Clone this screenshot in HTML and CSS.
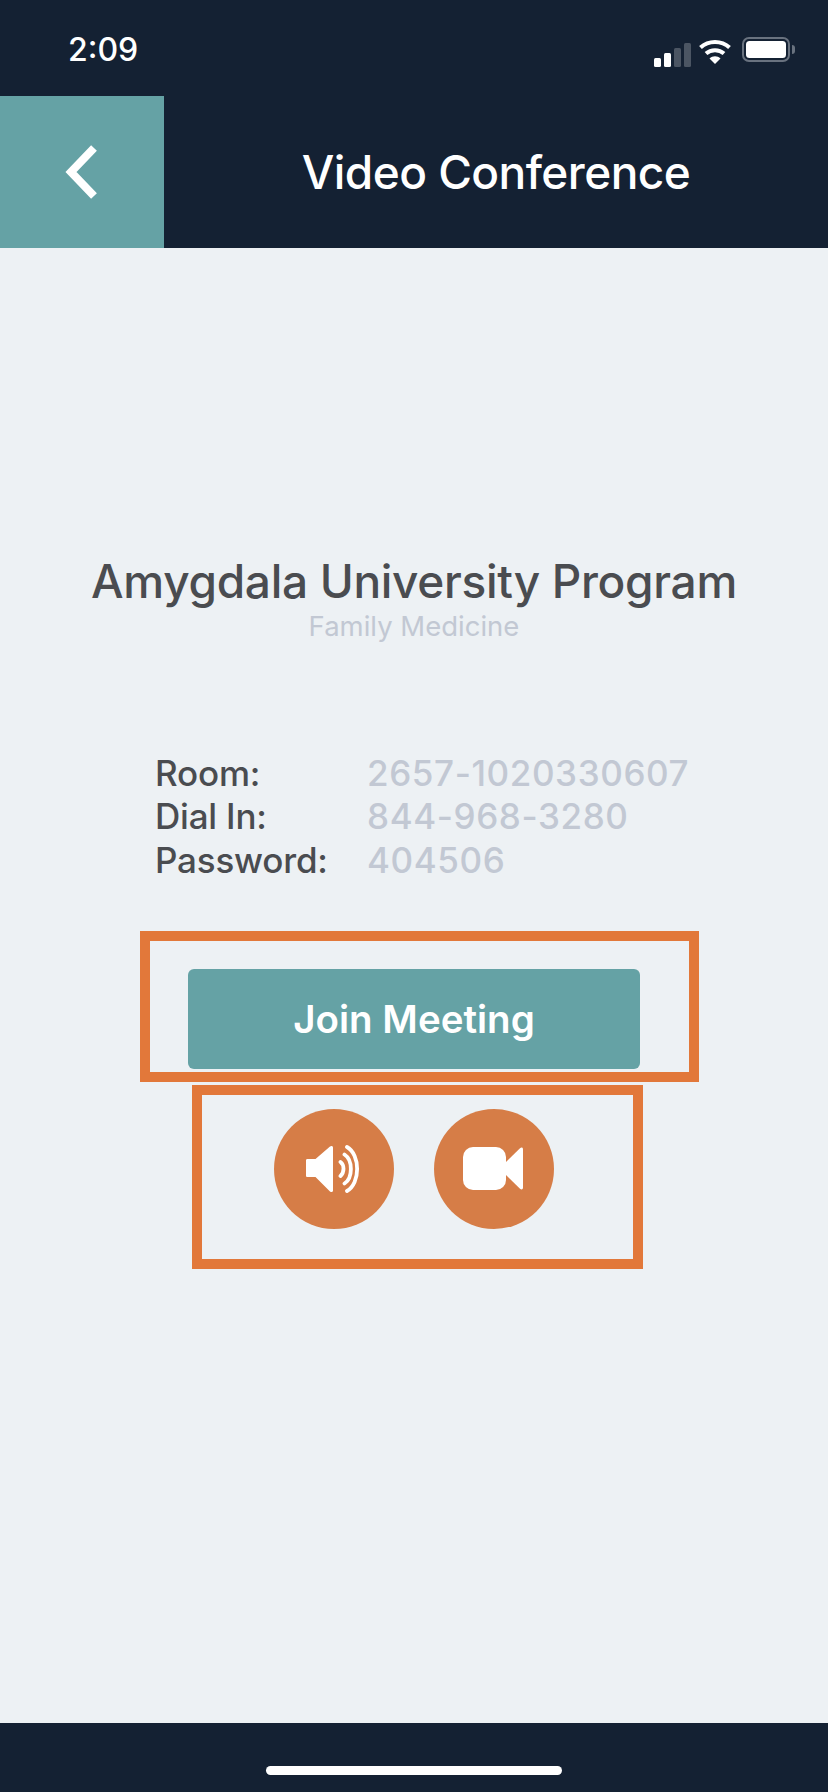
FILE: index.html
```html
<!DOCTYPE html>
<html lang="en">
<head>
<meta charset="utf-8">
<title>Video Conference</title>
<link rel="stylesheet" href="styles.css">
</head>
<body>
<div class="app">
  <div class="status">
    <span class="time">2:09</span>
    <div class="status-icons">
      <svg class="signal" width="38" height="26" viewBox="0 0 38 26">
        <rect x="0" y="15" width="7" height="9" rx="1.5" fill="#fff"/>
        <rect x="10" y="10" width="7" height="14" rx="1.5" fill="#fff"/>
        <rect x="20" y="5" width="7" height="19" rx="1.5" fill="#4b5563"/>
        <rect x="30" y="0" width="7" height="24" rx="1.5" fill="#4b5563"/>
      </svg>
      <svg class="wifi" width="34" height="26" viewBox="0 0 34 26">
        <path d="M2.5 8.5C10.5 1 23.5 1 31.5 8.5" fill="none" stroke="#fff" stroke-width="4"/>
        <path d="M8 14.5C13 10 21 10 26 14.5" fill="none" stroke="#fff" stroke-width="4"/>
        <path d="M11.5 19.5C14.5 16.6 19.5 16.6 22.5 19.5L17 25Z" fill="#fff"/>
      </svg>
      <div class="battery"><div class="battery-fill"></div></div>
      <div class="battery-nub"></div>
    </div>
  </div>
  <header class="bar">
    <button class="back" aria-label="Back">
      <svg width="36" height="56" viewBox="0 0 36 56">
        <path d="M31 4L8 28L31 52" fill="none" stroke="#fff" stroke-width="8"/>
      </svg>
    </button>
    <h1 class="bar-title">Video Conference</h1>
  </header>
  <main class="content">
    <h2 class="program">Amygdala University Program</h2>
    <p class="dept">Family Medicine</p>
    <dl class="info">
      <dt>Room:</dt><dd>2657-1020330607</dd>
      <dt>Dial In:</dt><dd>844-968-3280</dd>
      <dt>Password:</dt><dd>404506</dd>
    </dl>
    <div class="box box-join">
      <button class="join">Join Meeting</button>
    </div>
    <div class="box box-icons">
      <button class="circle" aria-label="Audio">
        <svg width="56" height="48" viewBox="0 0 56 48">
          <path d="M1.500 14H9.500L24 1.500C25.500.5 27 1 27 2.500V45.500C27 47 25.500 47.500 24 46.500L9.500 32H1.500C.5 32 0 31.500 0 30.500V15.500C0 14.500.5 14 1.500 14Z" fill="#fff"/>
          <path d="M34.500 17C38.500 20 38.500 27.500 34.500 31M38.500 9.500C47 15 47 33 38.500 38.500M41 2C54.500 9.500 54.500 38.500 41 46" fill="none" stroke="#fff" stroke-width="3.800" stroke-linecap="round"/>
        </svg>
      </button>
      <button class="circle" aria-label="Video">
        <svg class="cam" width="60" height="44" viewBox="0 0 60 44">
          <rect x="0" y="0" width="43" height="43" rx="10" fill="#fff"/>
          <path d="M43 15L57 1.200C58.500 0 60 .5 60 2.500V40.500C60 42.500 58.500 43 57 41.800L43 28Z" fill="#fff"/>
        </svg>
      </button>
    </div>
  </main>
  <footer class="foot"><div class="home"></div></footer>
</div>
</body>
</html>
```
FILE: styles.css
```css
* { box-sizing: border-box; }
html, body { margin: 0; padding: 0; }
body { font-family: Inter, "Liberation Sans", sans-serif; background: #edf1f4; }
.app { width: 828px; height: 1792px; display: flex; flex-direction: column; overflow: hidden; }

.status { height: 96px; background: #142133; display: flex; justify-content: space-between; padding: 31px 33px 0 68px; color: #fff; }
.time { font-size: 32px; font-weight: 500; line-height: 38px; }
.status-icons { display: flex; align-items: flex-start; padding-top: 6px; }
.signal { margin-top: 6px; margin-right: 6px; }
.wifi { margin-top: 2px; margin-right: 10px; }
.battery { width: 48px; height: 25px; border: 2.500px solid #69727f; border-radius: 7px; padding: 2px; }
.battery-fill { width: 100%; height: 100%; background: #fff; border-radius: 3.500px; }
.battery-nub { width: 3px; height: 9px; margin: 8px 0 0 2px; background: #69727f; border-radius: 0 3px 3px 0; }

.bar { height: 152px; background: #142133; display: flex; }
.back { width: 164px; background: #65a2a5; border: 0; padding: 0; display: flex; align-items: center; justify-content: center; }
.back svg { margin-right: 2px; }
.bar-title { flex: 1; margin: 0; text-align: center; color: #fff; font-size: 46px; font-weight: 550; letter-spacing: -.55px; line-height: 152px; }

.content { flex: 1; display: flex; flex-direction: column; align-items: flex-start; }
.program { width: 100%; margin: 305px 0 0; text-align: center; color: #4a4c50; font-size: 46px; font-weight: 550; letter-spacing: -.3px; line-height: 56px; }
.dept { width: 100%; margin: 0; text-align: center; color: #c2c8d3; font-size: 27.500px; line-height: 35px; }
.info { display: grid; grid-template-columns: 212px auto; margin: 108px 0 0 155px; font-size: 35px; font-weight: 550; line-height: 43.300px; }
.info dt { color: #4a4c50; letter-spacing: -.2px; }
.info dd { margin: 0; color: #c2c8d3; letter-spacing: .6px; }

.box { border: 10px solid #e2783a; }
.box-join { width: 559px; height: 151px; margin: 49px 0 0 140px; padding: 28px 0 0 38px; }
.join { display: block; width: 452px; height: 100px; background: #65a2a5; border: 0; border-radius: 6px; color: #fff; font: 600 38.500px Inter, "Liberation Sans", sans-serif; }
.box-icons { width: 451px; height: 184px; margin: 3px 0 0 192px; padding: 14px 0 0 72px; display: flex; gap: 40px; }
.circle { width: 120px; height: 120px; border: 0; padding: 0; border-radius: 50%; background: #d67d47; display: flex; align-items: center; justify-content: center; }
.cam { margin-right: 2px; }

.foot { height: 69px; background: #142133; display: flex; justify-content: center; padding-top: 43px; }
.home { width: 296px; height: 9px; border-radius: 5px; background: #fff; }
```
